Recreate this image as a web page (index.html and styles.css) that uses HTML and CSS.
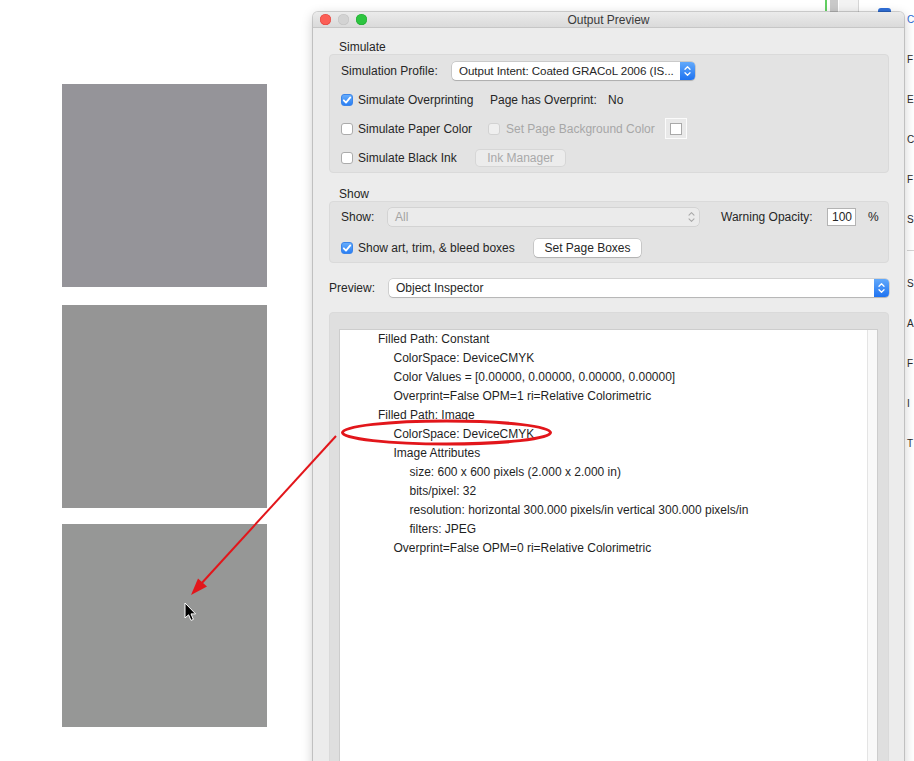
FILE: index.html
```html
<!DOCTYPE html>
<html>
<head>
<meta charset="utf-8">
<title>Output Preview</title>
<link rel="stylesheet" href="styles.css">
</head>
<body>
<div class="desk">
  <div class="swatches">
    <div class="sq sq1"></div>
    <div class="sq sq2"></div>
    <div class="sq sq3"></div>
  </div>

  <div class="bk-green"></div>
  <div class="bk-bar"></div>
  <div class="bk-pane"></div>
  <div class="bk-blue"></div>

  <div class="sidebar">
    <div class="sb-group">
      <div class="sb-item sb-active">C</div>
      <div class="sb-item">F</div>
      <div class="sb-item">E</div>
      <div class="sb-item">C</div>
      <div class="sb-item">F</div>
      <div class="sb-item">S</div>
    </div>
    <div class="sb-divider"></div>
    <div class="sb-group">
      <div class="sb-item">S</div>
      <div class="sb-item">A</div>
      <div class="sb-item">F</div>
      <div class="sb-item">I</div>
      <div class="sb-item">T</div>
    </div>
  </div>

  <div class="window">
    <div class="titlebar">
      <div class="lights">
        <span class="light red"></span>
        <span class="light grey"></span>
        <span class="light green"></span>
      </div>
      <div class="title">Output Preview</div>
    </div>
    <div class="wbody">
      <div class="sec-label">Simulate</div>
      <div class="group g1">
        <div class="row">
          <span class="lbl w-profile">Simulation Profile:</span>
          <div class="popup p-profile">
            <span class="ptext">Output Intent: Coated GRACoL 2006 (IS...</span>
            <span class="stepper blue"><svg width="15" height="18" viewBox="0 0 15 18"><path d="M5 7.2 L7.5 4.7 L10 7.2 M5 10.8 L7.5 13.3 L10 10.8" fill="none" stroke="#fff" stroke-width="1.3" stroke-linecap="round" stroke-linejoin="round"/></svg></span>
          </div>
        </div>
        <div class="row">
          <span class="cb-item w-ovp"><span class="cb checked"><svg width="12" height="12" viewBox="0 0 12 12"><path d="M2.8 6.3 L5 8.6 L9.3 3.4" fill="none" stroke="#fff" stroke-width="1.8" stroke-linecap="round" stroke-linejoin="round"/></svg></span>Simulate Overprinting</span>
          <span class="lbl w-hasovp">Page has Overprint:</span>
          <span class="lbl">No</span>
        </div>
        <div class="row">
          <span class="cb-item w-paper"><span class="cb"></span>Simulate Paper Color</span>
          <span class="cb disabled"></span>
          <span class="lbl dim w-bg">Set Page Background Color</span>
          <span class="swatch"><span class="swatch-in"></span></span>
        </div>
        <div class="row">
          <span class="cb-item w-black"><span class="cb"></span>Simulate Black Ink</span>
          <span class="btn btn-dis w-ink">Ink Manager</span>
        </div>
      </div>

      <div class="sec-label sec-show">Show</div>
      <div class="group g2">
        <div class="row r-show">
          <span class="lbl w-show">Show:</span>
          <div class="popup p-show dis">
            <span class="ptext">All</span>
            <span class="stepper"><svg width="15" height="18" viewBox="0 0 15 18"><path d="M5 7.2 L7.5 4.7 L10 7.2 M5 10.8 L7.5 13.3 L10 10.8" fill="none" stroke="#a9a9a9" stroke-width="1.1" stroke-linecap="round" stroke-linejoin="round"/></svg></span>
          </div>
          <span class="lbl w-warn">Warning Opacity:</span>
          <span class="field">100</span>
          <span class="lbl pct">%</span>
        </div>
        <div class="row r-boxes">
          <span class="cb-item w-boxes"><span class="cb checked"><svg width="12" height="12" viewBox="0 0 12 12"><path d="M2.8 6.3 L5 8.6 L9.3 3.4" fill="none" stroke="#fff" stroke-width="1.8" stroke-linecap="round" stroke-linejoin="round"/></svg></span>Show art, trim, &amp; bleed boxes</span>
          <span class="btn w-setbox">Set Page Boxes</span>
        </div>
      </div>

      <div class="row r-preview">
        <span class="lbl w-preview">Preview:</span>
        <div class="popup p-preview">
          <span class="ptext">Object Inspector</span>
          <span class="stepper blue"><svg width="15" height="18" viewBox="0 0 15 18"><path d="M5 7.2 L7.5 4.7 L10 7.2 M5 10.8 L7.5 13.3 L10 10.8" fill="none" stroke="#fff" stroke-width="1.3" stroke-linecap="round" stroke-linejoin="round"/></svg></span>
        </div>
      </div>

      <div class="group g3">
        <div class="inspector">
          <div class="insp-text">
            <div class="ln l1">Filled Path: Constant</div>
            <div class="ln l2">ColorSpace: DeviceCMYK</div>
            <div class="ln l2">Color Values = [0.00000, 0.00000, 0.00000, 0.00000]</div>
            <div class="ln l2">Overprint=False OPM=1 ri=Relative Colorimetric</div>
            <div class="ln l1">Filled Path: Image</div>
            <div class="ln l2">ColorSpace: DeviceCMYK</div>
            <div class="ln l2">Image Attributes</div>
            <div class="ln l3">size: 600 x 600 pixels (2.000 x 2.000 in)</div>
            <div class="ln l3">bits/pixel: 32</div>
            <div class="ln l3">resolution: horizontal 300.000 pixels/in vertical 300.000 pixels/in</div>
            <div class="ln l3">filters: JPEG</div>
            <div class="ln l2">Overprint=False OPM=0 ri=Relative Colorimetric</div>
          </div>
          <div class="vscroll"></div>
        </div>
      </div>
    </div>
  </div>

  <svg class="annot" width="914" height="761" viewBox="0 0 914 761">
    <ellipse cx="446.5" cy="432.5" rx="104" ry="11.5" fill="none" stroke="#e2161b" stroke-width="3"/>
    <line x1="336" y1="436" x2="200" y2="585" stroke="#e2161b" stroke-width="2"/>
    <polygon points="191,595 207,586.5 198,578.5" fill="#e2161b"/>
    <path d="M185 603 L185 618 L188.6 614.8 L191 620.4 L193.4 619.4 L191 613.9 L195.6 613.9 Z" fill="#000" stroke="#fff" stroke-width="1" stroke-linejoin="round"/>
  </svg>
</div>
</body>
</html>
```

FILE: styles.css
```css
* { box-sizing: border-box; }
html, body { margin: 0; padding: 0; }
body {
  width: 914px;
  height: 761px;
  overflow: hidden;
  background: #ffffff;
  font-family: "Liberation Sans", Arial, sans-serif;
  font-size: 12px;
  color: #262626;
}
.desk { position: relative; width: 914px; height: 761px; overflow: hidden; }

/* grey squares on the page */
.swatches { display: flex; flex-direction: column; padding: 84px 0 0 62px; }
.sq { width: 205px; height: 203px; }
.sq1 { background: #959499; }
.sq2 { background: #959595; margin-top: 18px; }
.sq3 { background: #969796; margin-top: 16px; }

/* background application peeking out */
.bk-green { position: absolute; left: 825px; top: 0; width: 2px; height: 11px; background: #62cf62; }
.bk-bar { position: absolute; left: 830px; top: 0; width: 8px; height: 12px; background: #c9c9c9; }
.bk-pane { position: absolute; left: 839px; top: 0; width: 20px; height: 12px; background: #f3f3f3; border-right: 1px solid #d6d6d6; }
.bk-blue { position: absolute; left: 878px; top: 8px; width: 13px; height: 8px; background: #2f6fd8; border-radius: 3px 3px 0 0; }

.sidebar { position: absolute; left: 904px; top: 0; width: 10px; height: 761px; background: #fff; padding-left: 3px; overflow: hidden; }
.sb-group { display: flex; flex-direction: column; }
.sb-item { height: 40px; line-height: 40px; font-size: 10px; color: #2a2a2a; }
.sb-active { color: #2c69d3; }
.sb-divider { height: 1px; background: #d4d4d4; margin: 10px 0 13px; }

/* window */
.window {
  position: absolute;
  left: 313px;
  top: 12px;
  width: 591px;
  height: 760px;
  background: #ececec;
  border-radius: 5px 5px 0 0;
  box-shadow: 0 0 0 1px rgba(0,0,0,0.16), 0 3px 12px rgba(0,0,0,0.22);
}
.titlebar {
  position: relative;
  height: 16px;
  display: flex;
  align-items: center;
  justify-content: center;
  background: linear-gradient(#ebebeb, #dadada);
  border-bottom: 1px solid #c6c6c6;
  border-radius: 5px 5px 0 0;
}
.lights { position: absolute; left: 7px; top: 2px; display: flex; gap: 7px; }
.light { width: 11px; height: 11px; border-radius: 50%; }
.light.red { background: #fc5f57; box-shadow: inset 0 0 0 0.5px #e0443e; }
.light.grey { background: #d3d3d3; box-shadow: inset 0 0 0 0.5px #c2c2c2; }
.light.green { background: #2dc540; box-shadow: inset 0 0 0 0.5px #1fa92f; }
.title { font-size: 12px; color: #3a3a3a; line-height: 16px; }

.wbody { padding: 0 15px 0 16px; }
.sec-label { margin-top: 12px; height: 14px; line-height: 14px; padding-left: 10px; }
.sec-show { margin-top: 14px; }

.group {
  background: #e3e3e3;
  border: 1px solid #dadada;
  border-radius: 4px;
}
.g1 { padding: 1px 0 0 11px; }
.g1 .row { height: 29px; }
.g2 { padding: 0 0 0 11px; }
.r-show { height: 30px; }
.r-boxes { height: 30px; padding-top: 2px; }

.row { display: flex; align-items: center; white-space: nowrap; }
.lbl { display: inline-block; }
.dim { color: #a7a7a7; }

.w-profile { width: 111px; }
.w-hasovp { width: 118px; }
.w-bg { width: 159px; }
.w-show { width: 47px; }
.w-warn { width: 106px; margin-left: 22px; }
.pct { margin-left: 12px; }
.w-preview { width: 60px; }

.cb-item { display: flex; align-items: center; }
.w-ovp { width: 149px; }
.w-paper { width: 147px; }
.w-black { width: 135px; }
.w-boxes { width: 193px; }

.cb {
  flex: none;
  width: 12px;
  height: 12px;
  margin-right: 5px;
  border-radius: 3px;
  background: #fff;
  border: 1px solid #ababab;
  display: inline-flex;
}
.cb svg { margin: -1px; }
.cb.checked { background: linear-gradient(#66acfb, #2a7ff4); border-color: #3b85ea; }
.cb.disabled { background: #efefef; border-color: #d2d2d2; margin-right: 6px; }

.popup {
  position: relative;
  height: 18px;
  display: flex;
  align-items: center;
  padding-left: 7px;
  background: #fff;
  border-radius: 4px;
  box-shadow: 0 0 0 0.5px rgba(0,0,0,0.22), 0 1px 1px rgba(0,0,0,0.14);
}
.p-profile { width: 243px; }
.p-profile .ptext { font-size: 11.6px; letter-spacing: -0.05px; }
.p-show { width: 311px; }
.p-preview { flex: 1; }
.popup.dis { background: #ebebeb; box-shadow: 0 0 0 0.5px rgba(0,0,0,0.14); }
.popup.dis .ptext { color: #a3a3a3; }
.stepper { position: absolute; right: 0; top: 0; width: 15px; height: 18px; border-radius: 0 4px 4px 0; display: flex; }
.stepper.blue { background: linear-gradient(#62a9fb, #1f73f1); }

.swatch {
  width: 22px;
  height: 21px;
  padding: 4px;
  background: #e9e9e9;
  border: 1px solid #fbfbfb;
  display: flex;
}
.swatch-in { width: 12px; height: 12px; background: #fff; border: 1px solid #a9a9a9; }

.btn {
  display: flex;
  align-items: center;
  justify-content: center;
  height: 18px;
  background: #fff;
  border-radius: 4px;
  box-shadow: 0 0 0 0.5px rgba(0,0,0,0.22), 0 1px 1px rgba(0,0,0,0.12);
}
.btn-dis { height: 16px; background: #ececec; color: #a9a9a9; box-shadow: 0 0 0 1px #d6d6d6; }
.w-ink { width: 89px; }
.w-setbox { width: 107px; }

.field {
  width: 29px;
  height: 18px;
  line-height: 16px;
  padding-left: 4px;
  background: #fff;
  border: 1px solid #b3b3b3;
}

.r-preview { height: 18px; margin-top: 16px; }

.g3 { margin-top: 15px; height: 460px; padding: 16px 10px 0 9px; background: #dfdfdf; }
.inspector { display: flex; height: 440px; background: #fff; border: 1px solid #cdcdcd; }
.insp-text { flex: 1; font-size: 12px; line-height: 19px; color: #1f1f1f; white-space: nowrap; }
.l1 { padding-left: 38px; }
.l2 { padding-left: 53.5px; }
.l3 { padding-left: 69.5px; }
.vscroll { width: 10px; background: #f9f9f9; border-left: 1px solid #e4e4e4; }

.annot { position: absolute; left: 0; top: 0; pointer-events: none; }
```
